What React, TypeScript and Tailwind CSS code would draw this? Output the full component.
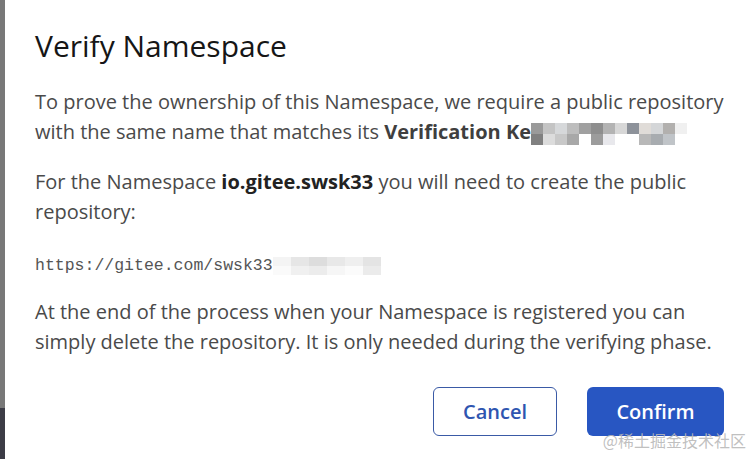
import React from 'react'

const keyMosaic = [
  ['#9a9a9a', '#c4c4c4', '#d6d8da', '#bdbdbd', '#a0a0a0', '#8e8e8e', '#b3b3b3', '#d7d7d7', '#8d929a', '#e0dcd8', '#d4d6d8', '#b2b0ae', '#f0f0f0'],
  ['#808080', '#dcdcdc', '#c8c8c8', '#a8a8a8', '#ffffff', '#9c9c9c', '#e8e8ec', '#ffffff', '#ffffff', '#b8b8b8', '#a8acb0', '#c0c4c8', '#ffffff'],
]

const urlMosaic = [
  ['#f4f4f4', '#e6e6e6', '#dddddd', '#e8e8e8', '#efefef', '#e4e4e4'],
  ['#fafafa', '#f0f0f0', '#ececec', '#f6f6f6', '#fbfbfb', '#ebebeb'],
]

const Mosaic = ({ rows, cell }: { rows: string[][]; cell: string }): JSX.Element => (
  <span className="inline-flex flex-col align-middle">
    {rows.map((row, i) => (
      <span key={i} className="flex">
        {row.map((c, j) => (
          <span key={j} className={cell} style={{ backgroundColor: c }} />
        ))}
      </span>
    ))}
  </span>
)

const App = (): JSX.Element => {
  return (
    <div className="flex h-[459px] w-[752px] overflow-hidden bg-white font-['Open_Sans',sans-serif]">
      <div className="flex w-[5px] shrink-0 flex-col">
        <div className="h-[408px] bg-[#787878]" />
        <div className="flex-1 bg-[#3c3c46]" />
      </div>
      <div className="relative flex-1 pl-[30px] pr-[10px] pt-[26px]">
        <h2 className="text-[30px] leading-[40px] text-[#161616]">Verify Namespace</h2>
        <div className="mt-[21px] text-[20px] leading-[30px] text-[#4a4a4a]">
          <p>
            To prove the ownership of this Namespace, we require a public repository with the same name that matches its{' '}
            <span className="font-bold text-[#3f3f3f]">Verification Ke</span>
            <Mosaic rows={keyMosaic} cell="h-[11px] w-[12px]" />
          </p>
          <p className="mt-[20px] pr-[20px]">
            For the Namespace <span className="font-bold text-[#222]">io.gitee.swsk33</span> you will need to create the public repository:
          </p>
          <p className="mt-[24px] font-['Liberation_Mono',monospace] text-[16.5px] text-[#555]">
            https://gitee.com/swsk33
            <Mosaic rows={urlMosaic} cell="h-[9px] w-[18px]" />
          </p>
          <p className="mt-[16px] pr-[20px]">
            At the end of the process when your Namespace is registered you can simply delete the repository. It is only needed during the verifying phase.
          </p>
        </div>
        <div className="mt-[30px] flex justify-end gap-[30px] pr-[18px]">
          <button className="h-[49px] w-[124px] rounded-[6px] border border-[#3a5aa6] bg-white text-[20px] font-semibold text-[#2f55b0]">
            Cancel
          </button>
          <button className="h-[49px] w-[137px] rounded-[6px] bg-[#2856c2] text-[20px] font-semibold text-white">
            Confirm
          </button>
        </div>
        <span className="absolute bottom-[7px] right-[6px] font-['Noto_Sans_CJK_SC',sans-serif] text-[16px] text-[#b8b8b8]/90">
          @稀土掘金技术社区
        </span>
      </div>
    </div>
  )
}

export default App
